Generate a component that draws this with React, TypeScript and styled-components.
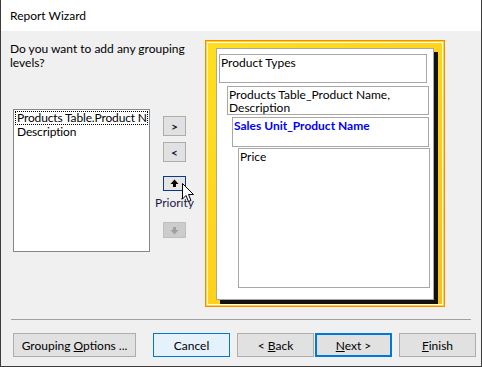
import React from 'react'
import styled, { createGlobalStyle, css } from 'styled-components'

const GlobalStyle = createGlobalStyle`
  html, body {
    margin: 0;
    padding: 0;
    background: #ffffff;
  }
  * {
    box-sizing: border-box;
  }
`

const uiFont = `Lato, 'Liberation Sans', sans-serif`

const Window = styled.div`
  position: relative;
  width: 482px;
  height: 367px;
  display: flex;
  flex-direction: column;
  border: 1px solid #3c3c3c;
  border-top: none;
  font-family: ${uiFont};
  font-size: 12px;
  color: #000;
`

const TitleBar = styled.div`
  height: 31px;
  flex: none;
  display: flex;
  align-items: center;
  padding-left: 9px;
  padding-bottom: 1px;
  background: #ffffff;
  font-size: 12px;
`

const Body = styled.div`
  flex: 1;
  display: flex;
  flex-direction: column;
  padding: 9px 0 0 9px;
  background: #f0f0f0;
`

const Main = styled.div`
  display: flex;
  height: 267px;
`

const LeftCol = styled.div`
  width: 140px;
  display: flex;
  flex-direction: column;
`

const Question = styled.div`
  margin-top: 2px;
  line-height: 14px;
  white-space: nowrap;
`

const ListBox = styled.div`
  margin: 39px 0 0 3px;
  width: 137px;
  height: 143px;
  background: #ffffff;
  border: 1px solid #828790;
  padding: 1px 1px;
  overflow: hidden;
`

const ListItem = styled.div<{ $focused?: boolean }>`
  height: 14px;
  line-height: 12px;
  padding-left: 1px;
  white-space: nowrap;
  overflow: hidden;
  letter-spacing: -0.15px;
  border: 1px dotted transparent;
  ${(p) =>
    p.$focused &&
    css`
      border-color: #000;
    `}
`

const MidCol = styled.div`
  width: 49px;
  display: flex;
  flex-direction: column;
  align-items: center;
`

const ArrowButton = styled.div<{ $top: number; $kind?: 'normal' | 'focused' | 'disabled'; $h?: number }>`
  margin-top: ${(p) => p.$top}px;
  width: 23px;
  height: ${(p) => p.$h ?? 20}px;
  display: flex;
  align-items: center;
  justify-content: center;
  font-size: 12px;
  font-weight: bold;
  color: #1a1a4a;
  background: #e1e1e1;
  border: 1px solid #adadad;
  ${(p) =>
    p.$kind === 'focused' &&
    css`
      border-color: #0b3a8a;
      background: #e5e5e5;
    `}
  ${(p) =>
    p.$kind === 'disabled' &&
    css`
      background: #cccccc;
      border-color: #bfbfbf;
    `}
`

const PriorityLabel = styled.div`
  margin-top: 5px;
  line-height: 14px;
  color: #1a1a4a;
`

const Frame = styled.div`
  margin-left: 6px;
  width: 240px;
  height: 267px;
  border: 1px solid #ff8a00;
  padding: 7px 0 0 10px;
  background: linear-gradient(135deg, #ffe01c 0%, #ffd21a 55%, #fbbd22 100%);
  box-shadow:
    inset 0 0 0 1px #ffd51e,
    inset 0 0 0 2px #ffffff;
`

const Page = styled.div`
  width: 218px;
  height: 252px;
  background: #ffffff;
  border: 1px solid #a8a8a8;
  box-shadow: 4px 4px 0 #111111;
  padding-top: 5px;
  display: flex;
  flex-direction: column;
`

const GroupBox = styled.div<{ $left: number; $width: number; $height: number; $top: number }>`
  margin: ${(p) => p.$top}px 0 0 ${(p) => p.$left}px;
  width: ${(p) => p.$width}px;
  height: ${(p) => p.$height}px;
  border: 1px solid #a8a8a8;
  padding: 1px 0 0 1px;
  line-height: 13px;
  color: #000;
`

const BlueText = styled.span`
  color: #0000ff;
  font-weight: bold;
`

const Separator = styled.div`
  margin: 12px 0 0 1px;
  width: 460px;
  height: 1px;
  background: #a0a0a0;
`

const ButtonRow = styled.div`
  margin: 13px 0 0 3px;
  display: flex;
`

const Button = styled.div<{ $width: number; $gap: number; $variant?: 'default' | 'hover' | 'primary' }>`
  margin-left: ${(p) => p.$gap}px;
  width: ${(p) => p.$width}px;
  height: 24px;
  display: flex;
  align-items: center;
  justify-content: center;
  background: #e1e1e1;
  border: 1px solid #adadad;
  color: #000;
  ${(p) =>
    p.$variant === 'hover' &&
    css`
      background: #e5f1fb;
      border-color: #0078d7;
    `}
  ${(p) =>
    p.$variant === 'primary' &&
    css`
      border: 2px solid #0078d7;
    `}
`

const Cursor = styled.svg`
  position: absolute;
  left: 181px;
  top: 183px;
`

const UpArrow = () => (
  <svg width="9" height="9" viewBox="0 0 9 9">
    <path d="M4.5 0.5 L8.5 5 L6 5 L6 8 L3 8 L3 5 L0.5 5 Z" fill="#000" />
  </svg>
)

const DownArrow = () => (
  <svg width="9" height="9" viewBox="0 0 9 9">
    <path d="M4.5 8.5 L8.5 4 L6 4 L6 1 L3 1 L3 4 L0.5 4 Z" fill="#a0a0a0" />
  </svg>
)

export default function App() {
  return (
    <>
      <GlobalStyle />
      <Window>
        <TitleBar>Report Wizard</TitleBar>
        <Body>
          <Main>
            <LeftCol>
              <Question>
                Do you want to add any grouping
                <br />
                levels?
              </Question>
              <ListBox>
                <ListItem $focused>Products Table.Product Name</ListItem>
                <ListItem>Description</ListItem>
              </ListBox>
            </LeftCol>
            <MidCol>
              <ArrowButton $top={76}>&gt;</ArrowButton>
              <ArrowButton $top={6}>&lt;</ArrowButton>
              <ArrowButton $top={14} $h={15} $kind="focused">
                <UpArrow />
              </ArrowButton>
              <PriorityLabel>Priority</PriorityLabel>
              <ArrowButton $top={12} $h={16} $kind="disabled">
                <DownArrow />
              </ArrowButton>
            </MidCol>
            <Frame>
              <Page>
                <GroupBox $top={0} $left={2} $width={208} $height={29}>
                  Product Types
                </GroupBox>
                <GroupBox $top={3} $left={10} $width={202} $height={29}>
                  Products Table_Product Name,
                  <br />
                  Description
                </GroupBox>
                <GroupBox $top={2} $left={15} $width={197} $height={30}>
                  <BlueText>Sales Unit_Product Name</BlueText>
                </GroupBox>
                <GroupBox $top={1} $left={21} $width={192} $height={140}>
                  Price
                </GroupBox>
              </Page>
            </Frame>
          </Main>
          <Separator />
          <ButtonRow>
            <Button $gap={0} $width={123}>
              <span>
                Grouping <u>O</u>ptions ...
              </span>
            </Button>
            <Button $gap={17} $width={77} $variant="hover">
              <span>Cancel</span>
            </Button>
            <Button $gap={7} $width={77}>
              <span>
                &lt; <u>B</u>ack
              </span>
            </Button>
            <Button $gap={1} $width={77} $variant="primary">
              <span>
                <u>N</u>ext &gt;
              </span>
            </Button>
            <Button $gap={7} $width={77}>
              <span>
                <u>F</u>inish
              </span>
            </Button>
          </ButtonRow>
        </Body>
        <Cursor width="13" height="20" viewBox="0 0 13 20">
          <path
            d="M0.5 0.5 L0.5 16 L4 12.5 L6.5 18.5 L9 17.5 L6.5 11.5 L11.5 11.5 Z"
            fill="#ffffff"
            stroke="#000000"
            strokeWidth="1"
            strokeLinejoin="miter"
          />
        </Cursor>
      </Window>
    </>
  )
}
